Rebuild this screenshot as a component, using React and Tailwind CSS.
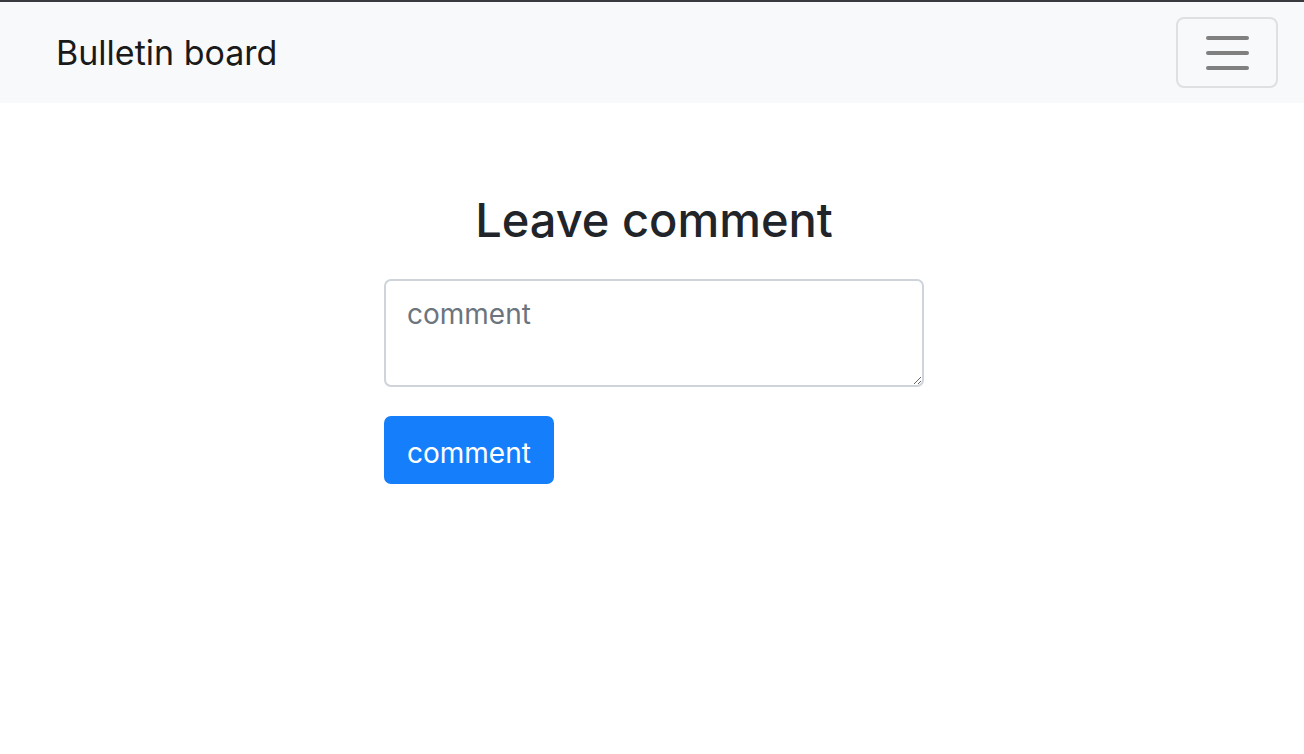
export default function App() {
  return (
    <div
      className="min-h-screen bg-white text-[#212529]"
      style={{ fontFamily: "Inter, 'Liberation Sans', sans-serif" }}
    >
      <nav className="flex h-[103px] items-center justify-between border-t-2 border-[#3a3b3f] bg-[#f8f9fa] pl-[56px] pr-[26px]">
        <span className="text-[34px] leading-none text-[#1a1a1a]">Bulletin board</span>
        <button className="flex h-[71px] w-[102px] flex-col items-center justify-center gap-[11px] rounded-[8px] border-2 border-[#dfe0e1]">
          <span className="block h-[4px] w-[43px] rounded-full bg-[#808080]" />
          <span className="block h-[4px] w-[43px] rounded-full bg-[#808080]" />
          <span className="block h-[4px] w-[43px] rounded-full bg-[#808080]" />
        </button>
      </nav>

      <main className="mx-auto w-[544px] pl-[4px] pt-[89px]">
        <h2 className="text-center text-[47px] font-medium leading-[1.2] text-[#212529]">
          Leave comment
        </h2>
        <textarea
          rows={2}
          placeholder="comment"
          className="mt-[31px] block h-[108px] w-full resize-y rounded-[7px] border-2 border-[#ced4da] px-[21px] py-[12px] text-[28px] leading-[1.5] text-[#495057] placeholder:text-[#6c757d] focus:outline-none"
        />
        <button className="mt-[29px] flex h-[68px] items-center rounded-[7px] bg-[#157ffb] px-[23px] pt-[6px] text-[28px] text-white">
          comment
        </button>
      </main>
    </div>
  );
}
